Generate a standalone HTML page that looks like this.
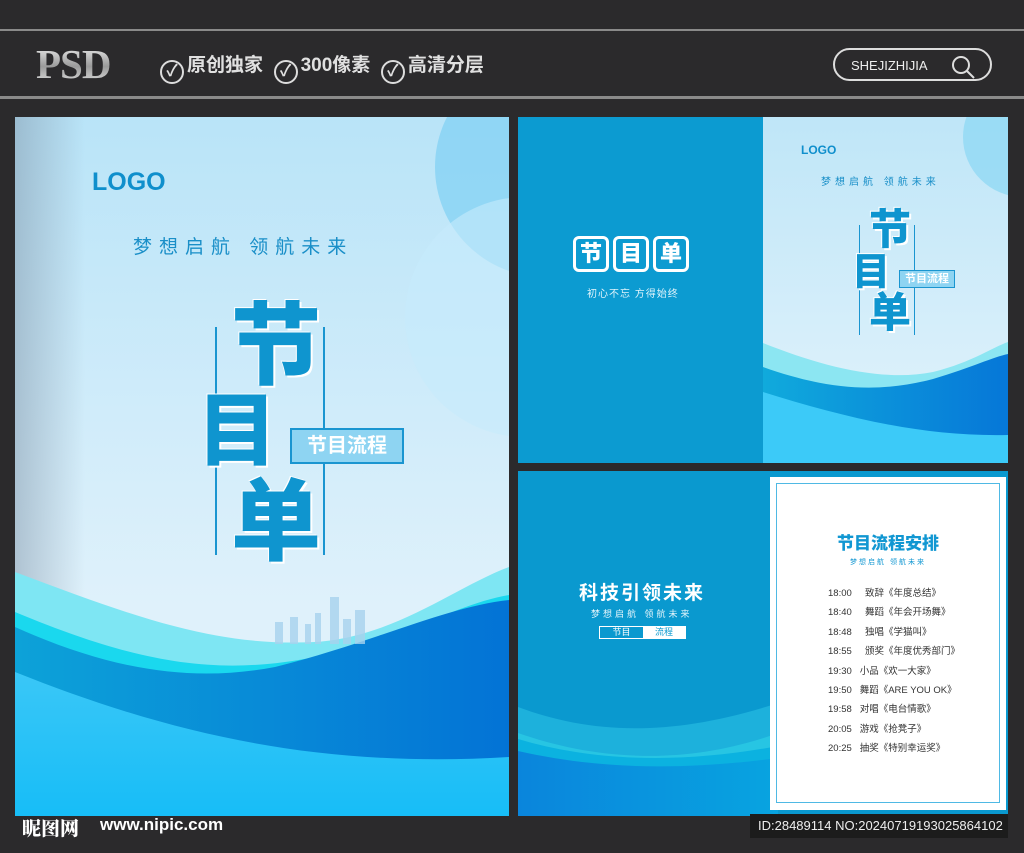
<!DOCTYPE html>
<html><head><meta charset="utf-8"><style>
*{margin:0;padding:0;box-sizing:border-box}
body{width:1024px;height:853px;background:#2b2a2c;position:relative;overflow:hidden;font-family:"Liberation Sans","Noto Sans CJK SC",sans-serif}
.a{position:absolute}
.cj{font-family:"Liberation Sans","Noto Sans CJK SC",sans-serif}
.big{position:absolute;font-weight:900;color:#0f95cf;line-height:1;text-shadow:2px 2px 0 #fff,-1px -1px 0 #fff;font-family:"Noto Sans CJK SC",sans-serif}
.ck{display:inline-block;width:24px;height:24px;border:2px solid #ddd;border-radius:50%;vertical-align:-5px;text-align:center;line-height:19px;font-size:16px;font-weight:bold;margin-right:3px}
</style></head><body>
<div class="a" style="left:0;top:29px;width:1024px;height:2px;background:#8a8a8a"></div>
<div class="a" style="left:0;top:96px;width:1024px;height:3px;background:#8a8a8a"></div>
<div class="a" style="left:36px;top:40px;font-family:'Liberation Serif',serif;font-weight:bold;font-size:41px;color:#e8e8e8;letter-spacing:-1px;background:linear-gradient(180deg,#fff,#9a9a9a 55%,#eee);-webkit-background-clip:text;background-clip:text;-webkit-text-fill-color:transparent">PSD</div>
<div class="a cj" style="left:160px;top:50px;font-size:19px;color:#e0e0e0;white-space:nowrap;font-weight:bold">
<span class="ck">✓</span>原创独家&nbsp;&nbsp;<span class="ck">✓</span>300像素&nbsp;&nbsp;<span class="ck">✓</span>高清分层</div>
<div class="a" style="left:833px;top:48px;width:159px;height:33px;border:2px solid #ddd;border-radius:17px;color:#eee;font-size:13px;padding:8px 0 0 16px">SHEJIZHIJIA</div>
<svg class="a" style="left:950px;top:54px" width="28" height="26"><circle cx="11" cy="11" r="8" fill="none" stroke="#ddd" stroke-width="2"/><path d="M17 17l7 7" stroke="#ddd" stroke-width="2"/></svg>

<!-- left panel -->
<div class="a" style="left:15px;top:117px;width:494px;height:699px;overflow:hidden;background:linear-gradient(180deg,#b9e4f8,#dff1fb 70%)">
<div class="a" style="left:420px;top:-60px;width:220px;height:220px;border-radius:50%;background:#7fd0f3;opacity:.7"></div>
<div class="a" style="left:390px;top:80px;width:240px;height:240px;border-radius:50%;background:#c7ebfb;opacity:.6"></div>
<div class="a" style="left:0;top:0;width:70px;height:699px;background:linear-gradient(90deg,rgba(120,140,160,.45),rgba(255,255,255,0))"></div>
<svg class="a" style="left:0;top:0" width="494" height="699">
<path d="M0 455 C120 500 200 530 300 525 C380 520 440 470 494 450 L494 699 L0 699Z" fill="#7ee6f3"/>
<path d="M0 495 C120 545 200 560 300 540 C400 515 450 485 494 478 L494 699 L0 699Z" fill="#1ad8ee"/>
<path d="M0 510 C100 555 180 565 260 550 C360 525 430 490 494 483 L494 699 L0 699Z" fill="url(#g1)"/>
<path d="M0 555 C150 615 300 652 494 640 L494 699 L0 699Z" fill="url(#g2)"/>
<defs><linearGradient id="g1" x1="0" x2="1"><stop offset="0" stop-color="#0da2d8"/><stop offset="1" stop-color="#0373d6"/></linearGradient>
<linearGradient id="g2" x1="0" y1="0" x2="0" y2="1"><stop offset="0" stop-color="#3ac7f7"/><stop offset="1" stop-color="#17bdf7"/></linearGradient></defs>
<g fill="#a8d3ee" opacity=".8"><rect x="260" y="505" width="8" height="22"/><rect x="275" y="500" width="8" height="27"/><rect x="290" y="507" width="6" height="20"/><rect x="300" y="496" width="6" height="31"/><rect x="315" y="480" width="9" height="47"/><rect x="328" y="502" width="8" height="25"/><rect x="340" y="493" width="10" height="34"/></g>
</svg>
<div class="a" style="left:77px;top:51px;font-size:25px;font-weight:bold;color:#0f8fcc">LOGO</div>
<div class="a cj" style="left:118px;top:115px;font-size:19px;color:#1a8fc8;letter-spacing:7px">梦想启航 领航未来</div>
<div class="a" style="left:200px;top:210px;width:3px;height:228px;border-left:2px solid #1a95d0"></div>
<div class="a" style="left:308px;top:210px;width:3px;height:228px;border-left:2px solid #1a95d0"></div>
<div class="big" style="left:216px;top:176px;font-size:90px">节</div>
<div class="big" style="left:182px;top:268px;font-size:80px">目</div>
<div class="big" style="left:216px;top:352px;font-size:90px">单</div>
<div class="a cj" style="left:275px;top:311px;width:114px;height:36px;border:2px solid #1a95d0;background:#8ed4f2;color:#fff;font-size:20px;font-weight:bold;text-align:center;line-height:32px">节目流程</div>
</div>

<!-- top right -->
<div class="a" style="left:518px;top:117px;width:245px;height:346px;background:#0c9bd1"></div>
<div class="a cj" style="left:573px;top:236px;white-space:nowrap">
<span style="display:inline-block;width:36px;height:36px;border:3px solid #fff;border-radius:6px;color:#fff;font-size:22px;font-weight:900;text-align:center;line-height:30px;margin-right:4px">节</span><span style="display:inline-block;width:36px;height:36px;border:3px solid #fff;border-radius:6px;color:#fff;font-size:22px;font-weight:900;text-align:center;line-height:30px;margin-right:4px">目</span><span style="display:inline-block;width:36px;height:36px;border:3px solid #fff;border-radius:6px;color:#fff;font-size:22px;font-weight:900;text-align:center;line-height:30px">单</span></div>
<div class="a cj" style="left:587px;top:285px;color:#dff3fb;font-size:10px;letter-spacing:1px">初心不忘 方得始终</div>
<div class="a" style="left:763px;top:117px;width:245px;height:346px;overflow:hidden;background:linear-gradient(180deg,#bfe6f8,#e3f3fb)">
<div class="a" style="left:200px;top:-40px;width:120px;height:120px;border-radius:50%;background:#8ad7f4;opacity:.7"></div>
<svg class="a" style="left:0;top:0" width="245" height="346">
<path d="M0 226 C60 250 120 265 170 255 C210 245 230 230 245 225 L245 346 L0 346Z" fill="#8ce6f2"/>
<path d="M0 250 C70 275 120 275 170 262 C210 250 230 240 245 237 L245 346 L0 346Z" fill="url(#g3)"/>
<path d="M0 275 C80 300 160 320 245 318 L245 346 L0 346Z" fill="#3ccaf8"/>
<defs><linearGradient id="g3" x1="0" x2="1"><stop offset="0" stop-color="#10aadc"/><stop offset="1" stop-color="#0677d8"/></linearGradient></defs>
</svg>
<div class="a" style="left:38px;top:26px;font-size:12px;font-weight:bold;color:#0f8fcc">LOGO</div>
<div class="a cj" style="left:58px;top:56px;font-size:10px;color:#1a8fc8;letter-spacing:4px">梦想启航 领航未来</div>
<div class="a" style="left:96px;top:108px;height:110px;border-left:1px solid #1a95d0"></div>
<div class="a" style="left:151px;top:108px;height:110px;border-left:1px solid #1a95d0"></div>
<div class="big" style="left:106px;top:89px;font-size:42px">节</div>
<div class="big" style="left:89px;top:133px;font-size:38px">目</div>
<div class="big" style="left:106px;top:172px;font-size:42px">单</div>
<div class="a cj" style="left:136px;top:153px;width:56px;height:18px;border:1px solid #1a95d0;background:#8ed4f2;color:#fff;font-size:11px;font-weight:bold;text-align:center;line-height:16px">节目流程</div>
</div>

<!-- bottom right -->
<div class="a" style="left:518px;top:471px;width:490px;height:345px;overflow:hidden;background:#0a99cf">
<svg class="a" style="left:0;top:0" width="260" height="345">
<path d="M0 236 C70 262 150 268 260 232 L260 345 L0 345Z" fill="#22b7df" opacity=".8"/>
<path d="M0 262 C80 290 170 295 260 262 L260 345 L0 345Z" fill="#2ccde6" opacity=".7"/>
<path d="M0 268 C80 292 170 292 260 275 L260 345 L0 345Z" fill="#0bb2e0"/>
<path d="M0 280 C80 298 160 300 260 287 L260 345 L0 345Z" fill="url(#g4)"/>
<defs><linearGradient id="g4" x1="0" x2="1"><stop offset="0" stop-color="#0a85dc"/><stop offset="1" stop-color="#08a4e0"/></linearGradient></defs>
</svg>
<div class="a cj" style="left:61px;top:107px;font-size:19px;font-weight:bold;color:#fff;letter-spacing:2px">科技引领未来</div>
<div class="a cj" style="left:73px;top:136px;font-size:9px;color:#e6f6fc;letter-spacing:3px">梦想启航 领航未来</div>
<div class="a cj" style="left:81px;top:155px;width:87px;height:13px;border:1px solid #fff;font-size:9px;line-height:11px;color:#fff;white-space:nowrap"><span style="display:inline-block;width:43px;text-align:center">节目</span><span style="display:inline-block;width:42px;text-align:center;background:#fff;color:#0a99cf">流程</span></div>
<div class="a" style="left:252px;top:6px;width:236px;height:333px;background:#fff"></div>
<div class="a" style="left:258px;top:12px;width:224px;height:320px;border:1px solid #4fb9e4"></div>
<div class="a cj" style="left:252px;top:58px;width:236px;text-align:center;font-size:17px;font-weight:900;color:#1197d2">节目流程安排</div>
<div class="a cj" style="left:252px;top:86px;width:236px;text-align:center;font-size:7px;color:#1197d2;letter-spacing:2px">梦想启航 领航未来</div>
<div class="a cj" style="left:310px;top:113px;font-size:9.5px;color:#333;line-height:19.4px;white-space:pre">18:00     致辞《年度总结》
18:40     舞蹈《年会开场舞》
18:48     独唱《学猫叫》
18:55     颁奖《年度优秀部门》
19:30   小品《欢一大家》
19:50   舞蹈《ARE YOU OK》
19:58   对唱《电台情歌》
20:05   游戏《抢凳子》
20:25   抽奖《特别幸运奖》</div>
</div>
<div class="a cj" style="left:22px;top:814px;font-size:19px;font-weight:900;color:#fff;font-family:'Noto Serif CJK SC',serif">昵图网</div>
<div class="a" style="left:100px;top:815px;font-size:17px;font-weight:bold;color:#fff">www.nipic.com</div>
<div class="a" style="left:750px;top:814px;width:258px;height:24px;background:#1c1c1c;color:#eee;font-size:13px;line-height:24px;padding-left:8px;white-space:nowrap">ID:28489114 NO:20240719193025864102</div>
</body></html>
